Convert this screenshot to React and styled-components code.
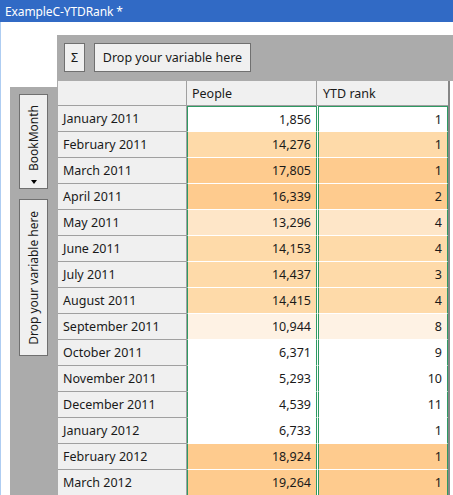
import React from "react";
import styled, { createGlobalStyle } from "styled-components";

const Global = createGlobalStyle`
  html, body { margin: 0; padding: 0; background: #fff; }
  body { font-family: "Noto Sans", "Open Sans", sans-serif; font-size: 12px; color: #1a1a1a; }
  * { box-sizing: border-box; }
`;

const Window = styled.div`
  width: 453px;
  height: 495px;
  overflow: hidden;
  display: flex;
  flex-direction: column;
  background: #fff;
`;

const TitleBar = styled.div`
  height: 22px;
  flex: none;
  background: #316ac5;
  color: #fff;
  padding-left: 5px;
  display: flex;
  align-items: center;
  font-size: 12px;
  letter-spacing: -0.1px;
`;

const Body = styled.div`
  flex: 1;
  border-left: 1px solid #aecdf2;
  padding: 13px 0 0 9px;
  display: flex;
  align-items: flex-start;
  min-height: 0;
`;

const LeftPanel = styled.div`
  width: 47px;
  flex: none;
  margin-top: 52px;
  align-self: stretch;
  background: #ababab;
  padding: 7px 0 0 9px;
  display: flex;
  flex-direction: column;
  gap: 10px;
`;

const VButton = styled.div`
  width: 29px;
  height: ${(p) => p.$h}px;
  background: #f0f0f0;
  border: 1px solid #707070;
  display: flex;
  flex-direction: column;
  align-items: center;
  justify-content: ${(p) => (p.$arrow ? "flex-end" : "center")};
  padding-bottom: ${(p) => (p.$arrow ? 4 : 0)}px;
`;

const VText = styled.span`
  writing-mode: vertical-rl;
  transform: rotate(180deg);
  white-space: nowrap;
  font-size: 12px;
  line-height: 14px;
`;

const Arrow = styled.span`
  margin-top: 9px;
  width: 0;
  height: 0;
  border-left: 3.5px solid transparent;
  border-right: 3.5px solid transparent;
  border-top: 4px solid #000;
`;

const Main = styled.div`
  flex: 1;
  display: flex;
  flex-direction: column;
  min-width: 0;
`;

const Toolbar = styled.div`
  height: 46px;
  background: #ababab;
  padding: 8px 0 0 7px;
  display: flex;
  align-items: flex-start;
  gap: 9px;
`;

const TButton = styled.div`
  height: 29px;
  padding: 0 ${(p) => p.$pad}px;
  width: ${(p) => p.$w}px;
  background: #f0f0f0;
  border: 1px solid #707070;
  display: flex;
  align-items: center;
  justify-content: center;
  font-size: 12.5px;
  white-space: nowrap;
`;

const Table = styled.div`
  width: 393px;
  border-left: 1px solid #ababab;
  border-right: 2px solid #868686;
  display: grid;
  grid-template-columns: 129px 130px 1px 130px;
`;

const HeadCell = styled.div`
  height: 25px;
  background: #f0f0f0;
  border-bottom: 1px solid #a0a0a0;
  border-right: ${(p) => (p.$last ? "none" : "1px solid #a0a0a0")};
  padding-left: 5px;
  display: flex;
  align-items: center;
  font-size: 12.5px;
`;

const Gap = styled.div`
  background: ${(p) => (p.$head ? "#f0f0f0" : "#ffffff")};
  border-bottom: ${(p) => (p.$head ? "1px solid #a0a0a0" : "none")};
`;

const RowHead = styled.div`
  height: 26px;
  background: #f0f0f0;
  border-bottom: 1px solid #a0a0a0;
  border-right: 1px solid #a0a0a0;
  padding-left: 5px;
  display: flex;
  align-items: center;
  font-size: 12.5px;
  white-space: nowrap;
`;

const DataCell = styled.div`
  height: 26px;
  background: ${(p) => p.$bg};
  border-left: 1px solid #2e9a63;
  border-right: 1px solid #2e9a63;
  border-top: ${(p) => (p.$first ? "1px solid #2e9a63" : "none")};
  border-bottom: 1px solid #ffffff;
  padding-right: 5px;
  display: flex;
  align-items: center;
  justify-content: flex-end;
  font-size: 12.5px;
`;

const W = "#ffffff";
const C1 = "#fef2e4";
const C2 = "#fee6c8";
const C3 = "#fedaa9";
const C4 = "#fecb8e";

const rows = [
  ["January 2011", "1,856", "1", W],
  ["February 2011", "14,276", "1", C3],
  ["March 2011", "17,805", "1", C4],
  ["April 2011", "16,339", "2", C4],
  ["May 2011", "13,296", "4", C2],
  ["June 2011", "14,153", "4", C3],
  ["July 2011", "14,437", "3", C3],
  ["August 2011", "14,415", "4", C3],
  ["September 2011", "10,944", "8", C1],
  ["October 2011", "6,371", "9", W],
  ["November 2011", "5,293", "10", W],
  ["December 2011", "4,539", "11", W],
  ["January 2012", "6,733", "1", W],
  ["February 2012", "18,924", "1", C4],
  ["March 2012", "19,264", "1", C4],
];

export default function App() {
  return (
    <Window>
      <Global />
      <TitleBar>ExampleC-YTDRank *</TitleBar>
      <Body>
        <LeftPanel>
          <VButton $h={95} $arrow>
            <VText>BookMonth</VText>
            <Arrow />
          </VButton>
          <VButton $h={157}>
            <VText>Drop your variable here</VText>
          </VButton>
        </LeftPanel>
        <Main>
          <Toolbar>
            <TButton $w={21}>Σ</TButton>
            <TButton $w={157}>Drop your variable here</TButton>
          </Toolbar>
          <Table>
            <HeadCell />
            <HeadCell>People</HeadCell>
            <Gap $head />
            <HeadCell $last>YTD rank</HeadCell>
            {rows.map(([label, people, rank, bg], i) => (
              <React.Fragment key={label}>
                <RowHead>{label}</RowHead>
                <DataCell $bg={bg} $first={i === 0}>{people}</DataCell>
                <Gap />
                <DataCell $bg={bg} $first={i === 0}>{rank}</DataCell>
              </React.Fragment>
            ))}
          </Table>
        </Main>
      </Body>
    </Window>
  );
}
